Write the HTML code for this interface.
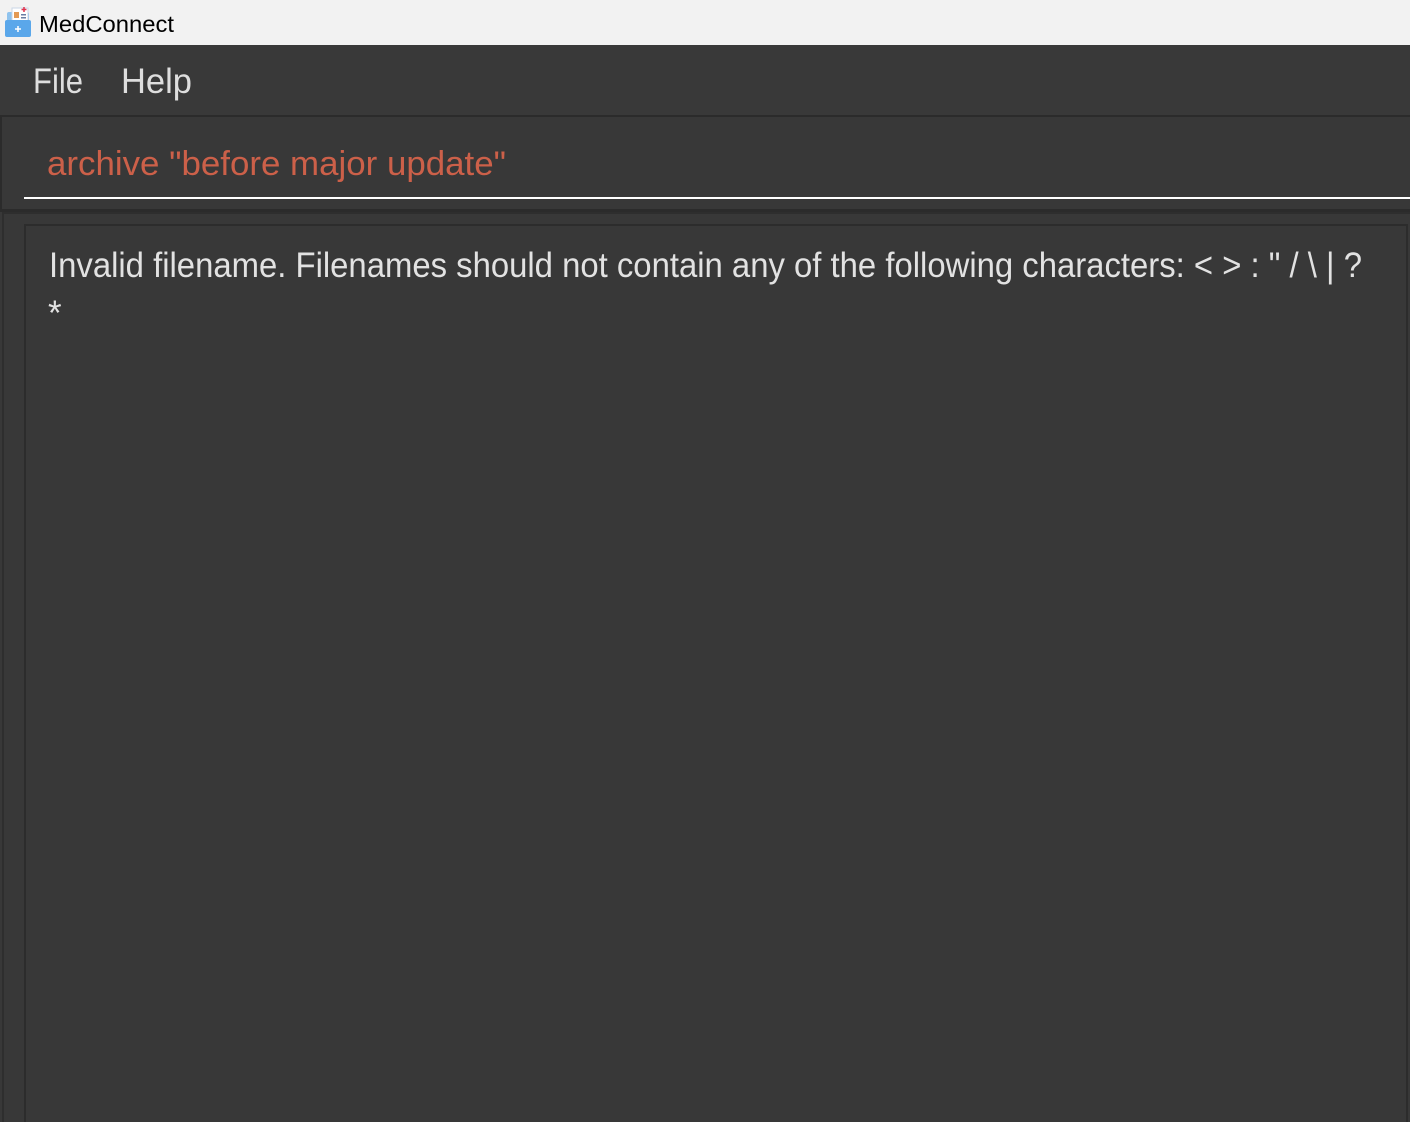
<!DOCTYPE html>
<html><head><meta charset="utf-8"><style>
html,body{margin:0;padding:0;width:1410px;height:1122px;overflow:hidden;background:#383838;font-family:"Liberation Sans",sans-serif}
.t{position:absolute;left:0;top:0;width:1410px;height:45px;background:#f2f2f2}
.abs{position:absolute}
svg{position:absolute;left:0;top:0}
</style></head><body>
<div class="t"></div>
<div class="abs" style="left:0;top:45px;width:1410px;height:70px;background:#393939"></div>
<div class="abs" style="left:0;top:115px;width:1410px;height:2px;background:#2b2b2b"></div>
<div class="abs" style="left:0;top:117px;width:2px;height:95px;background:#2b2b2b"></div>
<div class="abs" style="left:24px;top:197px;width:1386px;height:2px;background:#fff"></div>
<div class="abs" style="left:0;top:209px;width:1410px;height:3px;background:#2b2b2b"></div>
<div class="abs" style="left:2px;top:212px;width:1408px;height:2px;background:#2e2e2e"></div>
<div class="abs" style="left:2px;top:212px;width:2px;height:910px;background:#2e2e2e"></div>
<div class="abs" style="left:24px;top:224px;width:1384px;height:898px;border:2px solid #2c2c2c;border-bottom:none;box-sizing:border-box;background:#383838"></div>
<svg width="1410" height="1122">
  <g>
    <rect x="7" y="12" width="22" height="24" rx="2" fill="#8fc3ee"/>
    <rect x="12" y="8" width="16" height="18" fill="#fff" stroke="#c9d6e6"/>
    <rect x="14" y="12" width="5" height="6" fill="#e39a55"/>
    <rect x="21" y="14" width="5" height="1.5" fill="#6a7ea3"/>
    <rect x="21" y="17" width="5" height="1.5" fill="#6a7ea3"/>
    <path d="M24 7v5M21.5 9.5h5" stroke="#e0334d" stroke-width="1.5"/>
    <rect x="5" y="20" width="26" height="17" rx="2" fill="#5aa7ea"/>
    <path d="M18 26v6M15 29h6" stroke="#fff" stroke-width="1.5"/>
  </g>
  <text x="39" y="32" font-size="23" fill="#000" textLength="135" lengthAdjust="spacingAndGlyphs">MedConnect</text>
  <text x="33" y="93" font-size="35" fill="#dedede" textLength="50" lengthAdjust="spacingAndGlyphs">File</text>
  <text x="121" y="93" font-size="35" fill="#dedede" textLength="71" lengthAdjust="spacingAndGlyphs">Help</text>
  <text x="47" y="175" font-size="34" fill="#cc6049" textLength="459" lengthAdjust="spacingAndGlyphs">archive "before major update"</text>
  <text x="49" y="277" font-size="35" fill="#e2e2e2" textLength="1313" lengthAdjust="spacingAndGlyphs">Invalid filename. Filenames should not contain any of the following characters: &lt; &gt; : " / \ | ?</text>
  <text x="48" y="325" font-size="35" fill="#e2e2e2">*</text>
</svg>
</body></html>
